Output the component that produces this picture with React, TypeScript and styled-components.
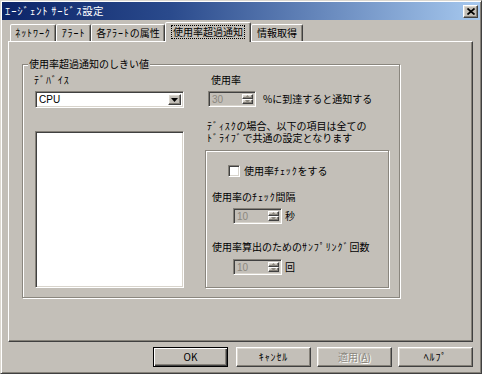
import React from 'react';
import styled, { createGlobalStyle, css } from 'styled-components';

const FACE = '#c3bfb8';

const Global = createGlobalStyle`
  html, body { margin: 0; padding: 0; background: ${FACE}; }
  body {
    font-family: "Noto Sans CJK JP", "Noto Sans", sans-serif;
    font-size: 10px;
    color: #000;
  }
  * { box-sizing: border-box; }
`;

const raised = css`
  border-style: solid;
  border-width: 1px;
  border-color: #fff #404040 #404040 #fff;
  box-shadow: inset -1px -1px 0 #858179, inset 1px 1px 0 #dcd8d0;
`;

const sunken = css`
  border-style: solid;
  border-width: 1px;
  border-color: #858179 #fff #fff #858179;
  box-shadow: inset 1px 1px 0 #404040, inset -1px -1px 0 #d8d4cc;
`;

const etched = css`
  border: 1px solid #8a867e;
  box-shadow: inset 1px 1px 0 #fff, 1px 1px 0 #fff;
`;

/* half-width katakana runs are spaced like the old fixed-cell UI font */
const Hw = styled.span`
  display: inline-block;
  line-height: 12px;
  letter-spacing: 0.9px;
`;

/* half-width (semi-)voiced mark */
const Dk = styled.span`
  display: inline-block;
  line-height: 12px;
  padding-right: 1px;
`;

const JP_RE = /([\uFF9E\uFF9F]|[\uFF61-\uFF9D]+)/;
const Jp = ({ children }: { children: string }) => (
  <>
    {children.split(JP_RE).map((s, i) => {
      if (i % 2 === 0) return s;
      if (s === '\uFF9E' || s === '\uFF9F') return <Dk key={i}>{s}</Dk>;
      return <Hw key={i}>{s}</Hw>;
    })}
  </>
);

const Window = styled.div`
  width: 482px;
  height: 374px;
  background: ${FACE};
  border-style: solid;
  border-width: 1px;
  border-color: #dcd8d0 #404040 #404040 #dcd8d0;
  box-shadow: inset 1px 1px 0 #fff, inset -1px -1px 0 #858179;
  padding: 1px;
  display: flex;
  flex-direction: column;
`;

const TitleBar = styled.div`
  height: 18px;
  background: linear-gradient(to right, #0c2468 0%, #2a4a8c 35%, #a6c8ee 100%);
  display: flex;
  align-items: center;
  justify-content: space-between;
  padding: 0 2px 0 3px;
`;

const TitleText = styled.span`
  color: #fff;
  font-size: 10.5px;
  line-height: 12px;
  letter-spacing: 0.3px;
`;

const CloseButton = styled.div`
  width: 15px;
  height: 13px;
  background: ${FACE};
  ${raised};
  display: flex;
  align-items: center;
  justify-content: center;
`;

const Body = styled.div`
  flex: 1;
  display: flex;
  flex-direction: column;
  padding: 2px 7px 0 6px;
`;

const TabStrip = styled.div`
  height: 19px;
  display: flex;
  align-items: flex-end;
  padding-left: 2px;
`;

const Tab = styled.div<{ $w: number; $active?: boolean }>`
  width: ${(p) => p.$w}px;
  height: 17px;
  background: ${FACE};
  border-style: solid;
  border-width: 1px 1px 0 1px;
  border-color: #fff #404040 transparent #fff;
  border-radius: 2px 2px 0 0;
  box-shadow: inset -1px 0 0 #858179;
  display: flex;
  align-items: center;
  justify-content: center;
  line-height: 12px;
  ${(p) =>
    p.$active &&
    css`
      height: 20px;
      margin-bottom: -1px;
      position: relative;
      z-index: 1;
      padding-bottom: 2px;
    `}
`;

const TabLabel = styled.span<{ $focus?: boolean }>`
  padding: 0 1px;
  border: 1px dotted ${(p) => (p.$focus ? '#000' : 'transparent')};
  line-height: 12px;
  white-space: nowrap;
`;

const TabPanel = styled.div`
  height: 301px;
  border-style: solid;
  border-width: 1px;
  border-color: #fff #404040 #404040 #fff;
  box-shadow: inset -1px -1px 0 #858179;
  padding: 22px 0 0 13px;
`;

const GroupBox = styled.div`
  position: relative;
  width: 378px;
  height: 234px;
  ${etched};
  padding: 9px 0 0 11px;
  display: flex;
  gap: 21px;
`;

const Legend = styled.span`
  position: absolute;
  top: -7px;
  left: 5px;
  padding: 0 1px;
  background: ${FACE};
  line-height: 12px;
`;

const Column = styled.div`
  display: flex;
  flex-direction: column;
`;

const Label = styled.span<{ $ml?: number; $mt?: number }>`
  line-height: 12px;
  white-space: nowrap;
  margin-left: ${(p) => p.$ml ?? 0}px;
  margin-top: ${(p) => p.$mt ?? 0}px;
`;

const ComboBox = styled.div`
  margin-top: 5px;
  margin-left: 1px;
  width: 149px;
  height: 17px;
  background: #fff;
  ${sunken};
  display: flex;
  align-items: stretch;
  padding: 2px;
`;

const ComboText = styled.span`
  flex: 1;
  line-height: 11px;
  padding-left: 1px;
  font-family: "Liberation Sans", "Noto Sans", sans-serif;
  font-size: 10px;
`;

const ArrowButton = styled.div`
  width: 13px;
  background: ${FACE};
  ${raised};
  display: flex;
  align-items: center;
  justify-content: center;
`;

const ListBox = styled.div`
  margin-top: 23px;
  margin-left: 1px;
  width: 149px;
  height: 157px;
  background: #fff;
  ${sunken};
`;

const Row = styled.div<{ $ml?: number; $mt?: number; $gap?: number }>`
  display: flex;
  align-items: center;
  gap: ${(p) => p.$gap ?? 3}px;
  margin-left: ${(p) => p.$ml ?? 0}px;
  margin-top: ${(p) => p.$mt ?? 0}px;
`;

const SpinBox = styled.div<{ $w: number }>`
  width: ${(p) => p.$w}px;
  height: 16px;
  background: ${FACE};
  ${sunken};
  display: flex;
  align-items: stretch;
  padding: 2px;
`;

const SpinValue = styled.span`
  flex: 1;
  color: #8c887f;
  line-height: 11px;
  padding-left: 1px;
  font-family: "Liberation Sans", "Noto Sans", sans-serif;
  font-size: 10px;
`;

const SpinButtons = styled.div`
  width: 11px;
  display: flex;
  flex-direction: column;
`;

const SpinButton = styled.div`
  flex: 1;
  background: ${FACE};
  ${raised};
  display: flex;
  align-items: center;
  justify-content: center;
`;

const Note = styled.div`
  margin-top: 13px;
  margin-left: 2px;
  display: flex;
  flex-direction: column;
`;

const NoteLine = styled.span`
  line-height: 12px;
  height: 12px;
  white-space: nowrap;
`;

const InnerBox = styled.div`
  margin-top: 6px;
  width: 184px;
  height: 138px;
  ${etched};
  padding: 14px 0 0 6px;
  display: flex;
  flex-direction: column;
`;

const CheckBox = styled.div`
  width: 12px;
  height: 12px;
  background: #fff;
  ${sunken};
`;

const ButtonRow = styled.div`
  margin-top: 5px;
  display: flex;
  justify-content: flex-end;
  gap: 6px;
`;

const PushButton = styled.div<{ $default?: boolean; $disabled?: boolean }>`
  width: 75px;
  height: 20px;
  background: ${FACE};
  ${raised};
  display: flex;
  align-items: center;
  justify-content: center;
  line-height: 12px;
  color: ${(p) => (p.$disabled ? '#8c887f' : '#000')};
  ${(p) => p.$disabled && css`text-shadow: 1px 1px 0 #fff;`}
  ${(p) =>
    p.$default &&
    css`
      margin-right: 2px;
      border-color: #000;
      box-shadow: inset 1px 1px 0 #fff, inset -1px -1px 0 #404040, inset -2px -2px 0 #858179;
    `}
`;

const Under = styled.span`
  text-decoration: underline;
`;

const Tri = ({ dir, color, w = 7, h = 4 }: { dir: 'up' | 'down'; color: string; w?: number; h?: number }) => (
  <svg width={w} height={h} viewBox={`0 0 ${w} ${h}`}>
    {dir === 'down' ? (
      <polygon points={`0,0 ${w},0 ${w / 2},${h}`} fill={color} />
    ) : (
      <polygon points={`0,${h} ${w},${h} ${w / 2},0`} fill={color} />
    )}
  </svg>
);

const Spinner = ({ value, w }: { value: string; w: number }) => (
  <SpinBox $w={w}>
    <SpinValue>{value}</SpinValue>
    <SpinButtons>
      <SpinButton>
        <Tri dir="up" color="#8c887f" w={5} h={3} />
      </SpinButton>
      <SpinButton>
        <Tri dir="down" color="#8c887f" w={5} h={3} />
      </SpinButton>
    </SpinButtons>
  </SpinBox>
);

const tabs = [
  { label: 'ﾈｯﾄﾜｰｸ', w: 46 },
  { label: 'ｱﾗｰﾄ', w: 35 },
  { label: '各ｱﾗｰﾄの属性', w: 74 },
  { label: '使用率超過通知', w: 86, active: true },
  { label: '情報取得', w: 52 },
];

export default function App() {
  return (
    <>
      <Global />
      <Window>
        <TitleBar>
          <TitleText>
            <Jp>ｴｰｼﾞｪﾝﾄ ｻｰﾋﾞｽ設定</Jp>
          </TitleText>
          <CloseButton>
            <svg width="8" height="7" viewBox="0 0 8 7">
              <path d="M0.5 0.5 L7.5 6.5 M7.5 0.5 L0.5 6.5" stroke="#000" strokeWidth="1.7" />
            </svg>
          </CloseButton>
        </TitleBar>
        <Body>
          <TabStrip>
            {tabs.map((t) => (
              <Tab key={t.label} $w={t.w} $active={t.active}>
                <TabLabel $focus={t.active}>
                  <Jp>{t.label}</Jp>
                </TabLabel>
              </Tab>
            ))}
          </TabStrip>
          <TabPanel>
            <GroupBox>
              <Legend>使用率超過通知のしきい値</Legend>
              <Column>
                <Label>
                  <Jp>ﾃﾞﾊﾞｲｽ</Jp>
                </Label>
                <ComboBox>
                  <ComboText>CPU</ComboText>
                  <ArrowButton>
                    <Tri dir="down" color="#000" />
                  </ArrowButton>
                </ComboBox>
                <ListBox />
              </Column>
              <Column>
                <Label $ml={6}>使用率</Label>
                <Row $ml={3} $mt={5} $gap={7}>
                  <Spinner value="30" w={48} />
                  <Label>%に到達すると通知する</Label>
                </Row>
                <Note>
                  <NoteLine>
                    <Jp>ﾃﾞｨｽｸの場合、以下の項目は全ての</Jp>
                  </NoteLine>
                  <NoteLine>
                    <Jp>ﾄﾞﾗｲﾌﾞで共通の設定となります</Jp>
                  </NoteLine>
                </Note>
                <InnerBox>
                  <Row $ml={16} $gap={4}>
                    <CheckBox />
                    <Label>
                      <Jp>使用率ﾁｪｯｸをする</Jp>
                    </Label>
                  </Row>
                  <Label $mt={14}>
                    <Jp>使用率のﾁｪｯｸ間隔</Jp>
                  </Label>
                  <Row $ml={21} $mt={5}>
                    <Spinner value="10" w={49} />
                    <Label>秒</Label>
                  </Row>
                  <Label $mt={17}>
                    <Jp>使用率算出のためのｻﾝﾌﾟﾘﾝｸﾞ回数</Jp>
                  </Label>
                  <Row $ml={21} $mt={6}>
                    <Spinner value="10" w={49} />
                    <Label>回</Label>
                  </Row>
                </InnerBox>
              </Column>
            </GroupBox>
          </TabPanel>
          <ButtonRow>
            <PushButton $default>OK</PushButton>
            <PushButton>
              <Jp>ｷｬﾝｾﾙ</Jp>
            </PushButton>
            <PushButton $disabled>
              適用(<Under>A</Under>)
            </PushButton>
            <PushButton>
              <Jp>ﾍﾙﾌﾟ</Jp>
            </PushButton>
          </ButtonRow>
        </Body>
      </Window>
    </>
  );
}
